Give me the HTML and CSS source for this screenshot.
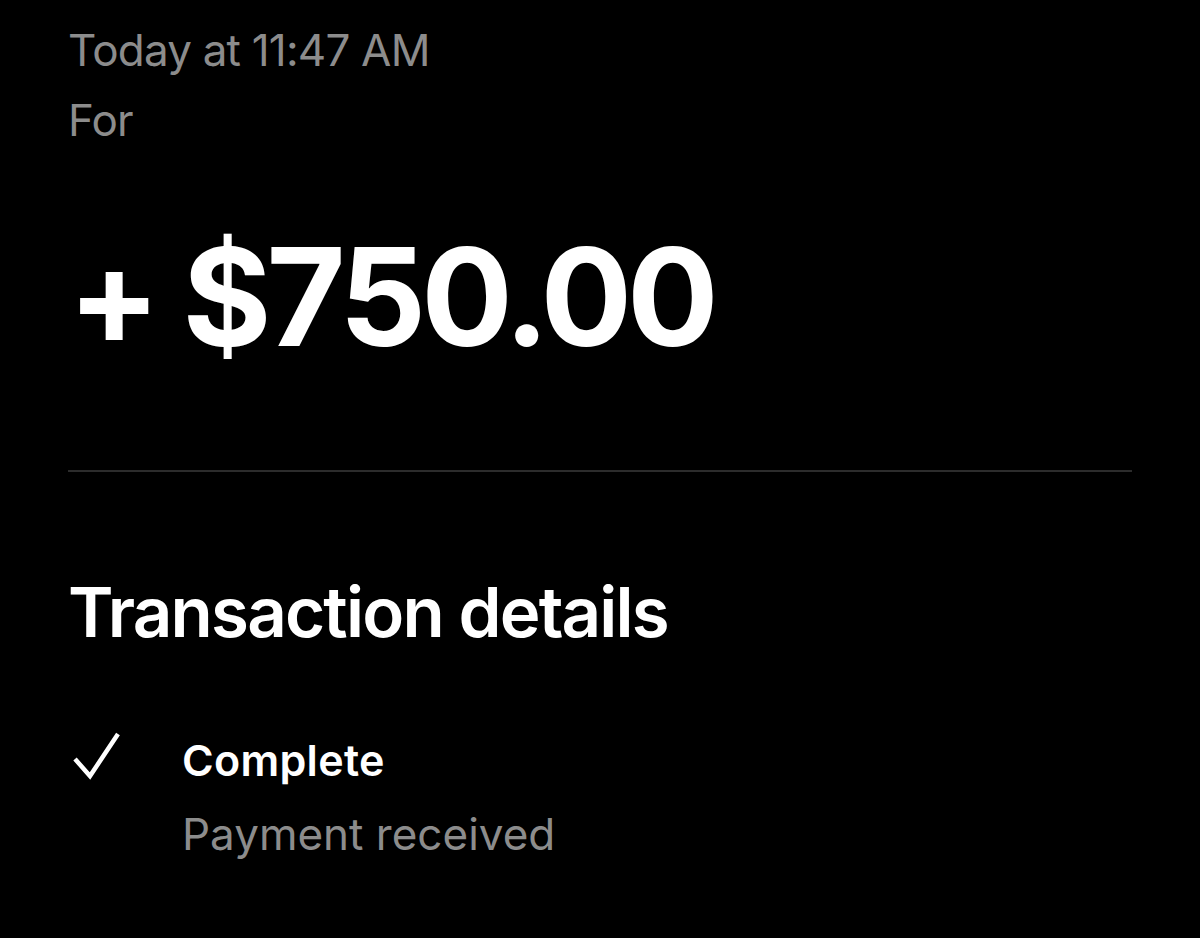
FILE: index.html
```html
<!DOCTYPE html>
<html lang="en">
<head>
    <meta charset="utf-8"/>
    <title>Payment details</title>
    <link rel="stylesheet" href="styles.css">
</head>
<body>
    <main>
        <header class="meta">
            <p class="meta-line">Today at 11:47 AM</p>
            <p class="meta-line">For <span class="redacted"></span></p>
        </header>

        <div class="amount">+ $750.00</div>

        <hr class="divider"/>

        <section class="details">
            <h2>Transaction details</h2>

            <div class="status">
                <svg class="check" width="50" height="50" viewBox="0 0 50 50">
                    <path d="M3 28 L18 45 L46 3" fill="none" stroke="#fff" stroke-width="4.5"/>
                </svg>
                <div class="status-text">
                    <div class="status-title">Complete</div>
                    <div class="status-sub">Payment received</div>
                </div>
            </div>
        </section>
    </main>
</body>
</html>
```

FILE: styles.css
```css
body {
    margin: 0;
    background-color: #000;
    color: #fff;
    font-family: Inter, 'Noto Sans', sans-serif;
}

main {
    padding: 15px 68px 0 68px;
}

.meta-line {
    margin: 0;
    font-size: 44px;
    line-height: 70px;
    color: #8c8c8c;
    letter-spacing: -0.8px;
}

.redacted {
    display: inline-block;
    width: 6px;
}

.amount {
    margin-top: 67px;
    font-size: 136px;
    font-weight: 700;
    line-height: 150px;
    letter-spacing: -5px;
}

.divider {
    border: 0;
    border-top: 2px solid #2c2c2c;
    margin: 98px 0 0 0;
}

.details h2 {
    margin: 100px 0 0 0;
    font-size: 69px;
    font-weight: 600;
    line-height: 80px;
    letter-spacing: -1.8px;
}

.status {
    display: flex;
    align-items: flex-start;
    gap: 60px;
    margin-top: 78px;
    padding-left: 4px;
}

.check {
    margin-top: 1px;
}

.status-title {
    font-size: 43px;
    font-weight: 600;
    line-height: 60px;
    letter-spacing: 0.3px;
}

.status-sub {
    margin-top: 14px;
    font-size: 44px;
    line-height: 60px;
    color: #8c8c8c;
}
```
